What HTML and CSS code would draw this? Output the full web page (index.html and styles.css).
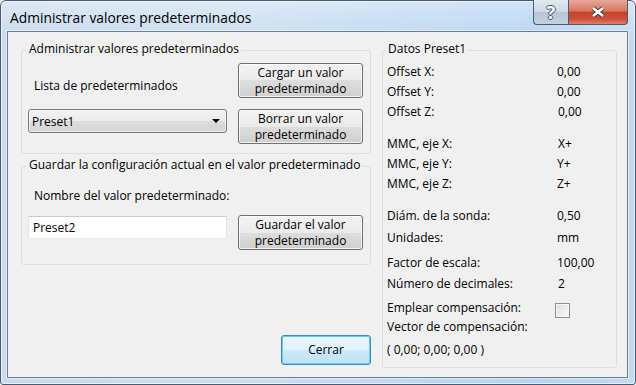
FILE: index.html
```html
<!DOCTYPE html>
<html lang="es">
<head>
    <meta charset="UTF-8">
    <meta name="viewport" content="width=device-width, initial-scale=1.0">
    <title>Administrar valores predeterminados</title>
    <link rel="stylesheet" href="styles.css">
</head>
<body>

    <div class="window">
        <div class="titlebar">
            <span class="title">Administrar valores predeterminados</span>
            <div class="caption-btns">
                <span class="cap-btn help">?</span>
                <span class="cap-btn close">
                    <svg width="16" height="12" viewBox="0 0 16 12">
                        <path d="M3 2 L13 10 M13 2 L3 10" stroke="#3d3f4a" stroke-width="4.6" fill="none"/>
                        <path d="M3 2 L13 10 M13 2 L3 10" stroke="#fff" stroke-width="2.6" fill="none"/>
                    </svg>
                </span>
            </div>
        </div>

        <div class="client">
            <div class="left">
                <fieldset class="group manage">
                    <legend>Administrar valores predeterminados</legend>
                    <span class="label list-label">Lista de predeterminados</span>
                    <button class="btn">Cargar un valor<br>predeterminado</button>
                    <div class="combo"><span>Preset1</span><span class="arrow"></span></div>
                    <button class="btn">Borrar un valor<br>predeterminado</button>
                </fieldset>

                <fieldset class="group save">
                    <legend>Guardar la configuración actual en el valor predeterminado</legend>
                    <span class="label name-label">Nombre del valor predeterminado:</span>
                    <div class="textbox">Preset2</div>
                    <button class="btn">Guardar el valor<br>predeterminado</button>
                </fieldset>

                <button class="btn default">Cerrar</button>
            </div>

            <!-- Datos del valor seleccionado -->
            <fieldset class="group data">
                <legend>Datos Preset1</legend>
                <div class="row"><span class="k">Offset X:</span><span>0,00</span></div>
                <div class="row"><span class="k">Offset Y:</span><span>0,00</span></div>
                <div class="row"><span class="k">Offset Z:</span><span class="nudge">0,00</span></div>

                <div class="row sp-12"><span class="k">MMC, eje X:</span><span class="nudge">X+</span></div>
                <div class="row"><span class="k">MMC, eje Y:</span><span>Y+</span></div>
                <div class="row"><span class="k">MMC, eje Z:</span><span>Z+</span></div>

                <div class="row sp-12"><span class="k">Diám. de la sonda:</span><span>0,50</span></div>
                <div class="row sp-2"><span class="k">Unidades:</span><span>mm</span></div>

                <div class="row sp-5"><span class="k">Factor de escala:</span><span>100,00</span></div>
                <div class="row sp-1"><span class="k">Número de decimales:</span><span class="nudge">2</span></div>

                <div class="row sp-4"><span class="k">Emplear compensación:</span><span class="check"></span></div>
                <div class="row sp-n1"><span class="k">Vector de compensación:</span></div>
                <div class="row sp-3"><span>( 0,00; 0,00; 0,00 )</span></div>
            </fieldset>
        </div>
    </div>

</body>
</html>
```

FILE: styles.css
```css
body {
    margin: 0;
    background: #fff;
    font-family: "Open Sans", "Noto Sans", sans-serif;
    font-size: 12px;
    color: #000;
}
.window {
    width: 636px;
    height: 385px;
    box-sizing: border-box;
    border: 1px solid #4a5a6e;
    border-radius: 6px 6px 3px 3px;
    padding: 0 7px 6px 6px;
    display: flex;
    flex-direction: column;
    background:
        linear-gradient(rgba(255, 255, 255, 0.35), rgba(255, 255, 255, 0) 40px),
        linear-gradient(to right, #c9dbee 0%, #cadef2 40%, #b6d4f3 85%, #c3daf0 100%);
    box-shadow: inset 0 0 0 1px rgba(255, 255, 255, 0.55);
}
/* Title bar */
.titlebar {
    height: 30px;
    display: flex;
    align-items: flex-start;
}
.title {
    font-size: 13.8px;
    line-height: 24px;
    padding-top: 5px;
    margin-left: 3px;
}
.caption-btns {
    margin-left: auto;
    margin-top: -1px;
    display: flex;
}
.cap-btn {
    height: 25px;
    box-sizing: border-box;
    border: 1px solid #4d5b6d;
    border-top: none;
    display: flex;
    align-items: center;
    justify-content: center;
}
.help {
    width: 35px;
    border-right: none;
    border-radius: 0 0 0 4px;
    background: linear-gradient(#e3eaf2, #cdd9e6 48%, #b6c6d8 52%, #c3d2e2);
    font-weight: bold;
    font-size: 18px;
    color: #fff;
    text-shadow: 1px 0 0 #4a5566, -1px 0 0 #4a5566, 0 1px 0 #4a5566, 0 -1px 0 #4a5566;
}
.close {
    width: 60px;
    border-radius: 0 0 4px 0;
    background: linear-gradient(#e9a899, #da7763 45%, #c7432d 52%, #cd513b 80%, #e08069);
}
/* Client area */
.client {
    flex: 1;
    display: flex;
    gap: 11px;
    padding: 9px 0 0 13px;
    border: 1px solid #6e7e90;
    background: #f0f0f0;
    box-shadow: 0 0 0 1px rgba(255, 255, 255, 0.45);
}
.left {
    width: 350px;
    display: flex;
    flex-direction: column;
}
.group {
    margin: 0;
    min-width: 0;
    border: 1px solid #d5dfe5;
    border-radius: 3px;
}
.group legend {
    padding: 0 2px 3px;
    margin-left: -1px;
    line-height: 16px;
}
.manage {
    display: grid;
    grid-template-columns: 199px 125px;
    column-gap: 11px;
    row-gap: 11px;
    padding: 3px 7px 9px 6px;
}
.save {
    display: grid;
    grid-template-columns: 199px 125px;
    column-gap: 11px;
    row-gap: 11px;
    padding: 12px 7px 14px 6px;
    margin-top: 3px;
}
.label {
    padding-left: 6px;
    line-height: 16px;
    align-self: start;
}
.list-label {
    padding-top: 15px;
}
.name-label {
    grid-column: 1 / 3;
}
.btn {
    font-family: inherit;
    font-size: 12px;
    line-height: 16px;
    color: #000;
    width: 125px;
    height: 35px;
    padding: 0;
    border: 1px solid #707070;
    border-radius: 3px;
    background: linear-gradient(#f2f2f2 0%, #ebebeb 50%, #dddddd 50%, #cfcfcf 100%);
    box-shadow: inset 0 0 0 1px rgba(255, 255, 255, 0.7);
}
.btn.default {
    width: 90px;
    height: 30px;
    margin-top: 70px;
    align-self: flex-end;
    border-color: #3c8ac4;
    box-shadow: inset 0 0 0 1px #5fcdf6;
    background: linear-gradient(#eaf7fe 0%, #dff2fc 50%, #cbe9f9 52%, #bfe3f6 100%);
}
.combo {
    height: 24px;
    box-sizing: border-box;
    align-self: start;
    display: flex;
    align-items: center;
    justify-content: space-between;
    padding: 0 6px 0 3px;
    border: 1px solid #7a7a7a;
    border-radius: 3px;
    background: linear-gradient(#f2f2f2 0%, #ebebeb 50%, #dddddd 50%, #d2d2d2 100%);
    box-shadow: inset 0 0 0 1px rgba(255, 255, 255, 0.6);
}
.arrow {
    width: 0;
    height: 0;
    border-left: 4px solid transparent;
    border-right: 4px solid transparent;
    border-top: 4px solid #000;
}
.textbox {
    height: 23px;
    margin-top: 1px;
    box-sizing: border-box;
    padding-left: 4px;
    line-height: 21px;
    background: #fff;
    border: 1px solid;
    border-color: #c6cbd2 #e0e5eb #e6eaef #e0e5eb;
}
/* Data panel */
.data {
    width: 235px;
    box-sizing: border-box;
    align-self: flex-start;
    padding: 2px 4px 7px 4px;
}
.row {
    display: flex;
    align-items: center;
    height: 20px;
    line-height: 20px;
    white-space: nowrap;
}
.row .k {
    width: 170px;
}
.nudge {
    margin-left: 1px;
}
.sp-12 { margin-top: 12px; }
.sp-5 { margin-top: 5px; }
.sp-4 { margin-top: 4px; }
.sp-3 { margin-top: 3px; }
.sp-2 { margin-top: 2px; }
.sp-1 { margin-top: 1px; }
.sp-n1 { margin-top: -1px; }
.check {
    width: 15px;
    height: 15px;
    box-sizing: border-box;
    margin: 4px 0 0 -2px;
    border: 1px solid #8f8f8f;
    background: linear-gradient(135deg, #dedede, #f8f8f8);
    box-shadow: inset 0 0 0 1px #f6f6f6;
}
```
